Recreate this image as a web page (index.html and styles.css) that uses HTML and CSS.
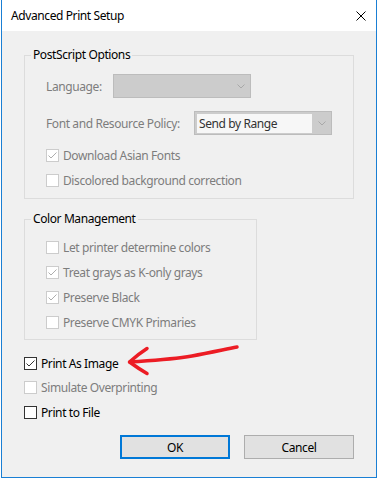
FILE: index.html
```html
<!DOCTYPE html>
<html>
<head>
<meta charset="utf-8">
<link rel="stylesheet" href="styles.css">
</head>
<body>
<div class="window">
  <div class="titlebar">
    <span class="title">Advanced Print Setup</span>
    <svg class="close" width="10" height="10" viewBox="0 0 10 10"><path d="M0.5 0.5 L9.5 9.5 M9.5 0.5 L0.5 9.5" stroke="#000" stroke-width="1" fill="none"/></svg>
  </div>
  <div class="content">
    <fieldset class="group ps">
      <legend>PostScript Options</legend>
      <div class="gbody ps-body">
        <div class="row">
          <span class="label lang">Language:</span>
          <div class="combo"><svg class="chev" width="8" height="5" viewBox="0 0 8 5"><path d="M0.5 0.5 L4 4 L7.5 0.5" stroke="#a8a8a8" fill="none"/></svg></div>
        </div>
        <div class="row row2">
          <span class="label policy">Font and Resource Policy:</span>
          <div class="combo"><span class="field">Send by Range</span><svg class="chev" width="8" height="5" viewBox="0 0 8 5"><path d="M0.5 0.5 L4 4 L7.5 0.5" stroke="#a8a8a8" fill="none"/></svg></div>
        </div>
        <div class="checks first">
          <div class="check disabled"><span class="box"><svg viewBox="0 0 11 11" width="11" height="11"><path d="M1.5 5.5 L4 8 L9.5 2.5" stroke="#adadad" fill="none"/></svg></span><span>Download Asian Fonts</span></div>
          <div class="check disabled"><span class="box"></span><span>Discolored background correction</span></div>
        </div>
      </div>
    </fieldset>
    <fieldset class="group cm">
      <legend>Color Management</legend>
      <div class="gbody cm-body">
        <div class="check disabled"><span class="box"></span><span>Let printer determine colors</span></div>
        <div class="check disabled"><span class="box"><svg viewBox="0 0 11 11" width="11" height="11"><path d="M1.5 5.5 L4 8 L9.5 2.5" stroke="#adadad" fill="none"/></svg></span><span>Treat grays as K-only grays</span></div>
        <div class="check disabled"><span class="box"><svg viewBox="0 0 11 11" width="11" height="11"><path d="M1.5 5.5 L4 8 L9.5 2.5" stroke="#adadad" fill="none"/></svg></span><span>Preserve Black</span></div>
        <div class="check disabled"><span class="box"></span><span>Preserve CMYK Primaries</span></div>
      </div>
    </fieldset>
    <div class="outer-checks">
      <div class="check on"><span class="box"><svg viewBox="0 0 11 11" width="11" height="11"><path d="M1.5 5.5 L4 8 L9.5 2.5" stroke="#333" fill="none"/></svg></span><span>Print As Image</span></div>
      <div class="check disabled sim"><span class="box"></span><span>Simulate Overprinting</span></div>
      <div class="check on"><span class="box"></span><span>Print to File</span></div>
    </div>
    <div class="buttons">
      <button class="btn default">OK</button>
      <button class="btn">Cancel</button>
    </div>
  </div>
  <svg class="arrow" width="377" height="479" viewBox="0 0 377 479">
    <path d="M237 347 C222 350 208 353 192 356 C172 359.5 152 360.5 130 362" stroke="#ec1c24" stroke-width="3.5" fill="none" stroke-linecap="round"/>
    <path d="M147 348.5 C140 353 134 358 129.5 362 C135 366 141 370 147 373.5" stroke="#ec1c24" stroke-width="3.5" fill="none" stroke-linecap="round" stroke-linejoin="round"/>
  </svg>
</div>
</body>
</html>
```

FILE: styles.css
```css
* { box-sizing: border-box; }
body {
  margin: 0;
  background: #ffffff;
  font-family: "Noto Sans", "Open Sans", sans-serif;
  font-size: 12px;
  letter-spacing: -0.4px;
  color: #000;
}
.window {
  position: relative;
  margin-left: 1px;
  width: 376px;
  height: 478px;
  border: 1px solid #1a7fd4;
  border-top: none;
  background: #f0f0f0;
  display: flex;
  flex-direction: column;
}
.titlebar {
  height: 31px;
  flex: none;
  background: #ffffff;
  display: flex;
  align-items: center;
  justify-content: space-between;
  padding: 0 10px 0 9px;
}
.title { line-height: 16px; }
.content {
  flex: 1;
  padding-left: 22px;
  display: flex;
  flex-direction: column;
}
.group {
  margin: 16px 0 0 0;
  padding: 0;
  border: 1px solid #dcdcdc;
  min-width: 0;
}
.group legend {
  margin-left: 6px;
  padding: 0 2px;
  line-height: 16px;
}
.ps { width: 330px; }
.cm { width: 233px; margin-top: 12px; }
.ps-body { padding: 11px 0 5px 21px; }
.cm-body { padding: 8px 0 4px 21px; }
.row {
  display: flex;
  align-items: center;
  height: 24px;
}
.row2 { margin-top: 13px; }
.label { color: #7d7d7d; }
.lang { width: 67px; }
.policy { width: 148px; }
.combo {
  width: 138px;
  height: 24px;
  border: 1px solid #bcbcbc;
  background: #cccccc;
  display: flex;
  align-items: center;
  justify-content: flex-end;
  padding: 1px 5px 1px 2px;
  gap: 6px;
}
.field {
  flex: 1;
  height: 19px;
  background: #f7f7f7;
  color: #333;
  padding-left: 2px;
  line-height: 19px;
}
.checks.first { margin-top: 8px; }
.check {
  display: flex;
  align-items: center;
  gap: 4px;
  height: 25px;
  color: #7d7d7d;
}
.box {
  width: 13px;
  height: 13px;
  flex: none;
  border: 1px solid #cccccc;
  background: #ffffff;
  display: flex;
}
.check.on { color: #000; }
.check.on .box { border-color: #333333; }
.outer-checks { margin-top: 11px; }
.outer-checks .check { height: 24.5px; }
.buttons {
  width: 330px;
  margin-top: 10.5px;
  display: flex;
  justify-content: flex-end;
  gap: 14px;
}
.btn {
  width: 110px;
  height: 24px;
  font: inherit;
  letter-spacing: inherit;
  color: #000;
  background: #e1e1e1;
  border: 1px solid #adadad;
  padding: 0;
}
.btn.default { border: 2px solid #0078d7; }
.arrow {
  position: absolute;
  left: -2px;
  top: 0;
  pointer-events: none;
}
```
